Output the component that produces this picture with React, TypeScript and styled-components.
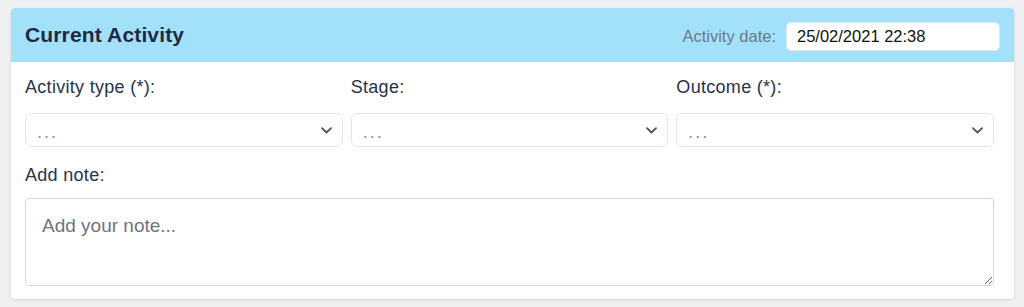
import React from "react";
import styled, { createGlobalStyle } from "styled-components";

const GlobalStyle = createGlobalStyle`
  html, body {
    margin: 0;
    padding: 0;
    background: #eff0f2;
    font-family: "Liberation Sans", Arial, sans-serif;
  }
  * { box-sizing: border-box; }
`;

const Page = styled.div`
  padding: 8px 10px 9px 11px;
`;

const Card = styled.section`
  background: #ffffff;
  border-radius: 4px;
  overflow: hidden;
  box-shadow: 0 1px 3px rgba(0, 0, 0, 0.12);
`;

const Header = styled.header`
  height: 54px;
  background: #a3e1fb;
  display: flex;
  align-items: center;
  justify-content: space-between;
  padding: 0 14px;
`;

const Title = styled.h2`
  margin: 0;
  font-size: 21px;
  font-weight: 700;
  color: #1d2a44;
  letter-spacing: 0.15px;
`;

const DateGroup = styled.div`
  display: flex;
  align-items: center;
  gap: 10px;
  margin-top: 2px;
`;

const DateLabel = styled.label`
  font-size: 16.5px;
  color: #6c7a84;
`;

const DateInput = styled.input`
  width: 214px;
  height: 29px;
  padding: 0 10px;
  border: 1px solid #e4e7eb;
  border-radius: 5px;
  background: #ffffff;
  font-family: "Liberation Sans", Arial, sans-serif;
  font-size: 16.5px;
  color: #111111;
  outline: none;
`;

const Body = styled.div`
  padding: 13px 20px 13px 14px;
`;

const Grid = styled.div`
  display: grid;
  grid-template-columns: repeat(3, 1fr);
  gap: 8px;
`;

const Field = styled.div`
  display: flex;
  flex-direction: column;
`;

const Label = styled.label<{ $top?: number }>`
  display: block;
  margin-top: ${(p) => p.$top ?? 0}px;
  font-size: 18px;
  line-height: 24px;
  color: #28324d;
  letter-spacing: 0.3px;
`;

const SelectBox = styled.div`
  margin-top: 14px;
  height: 34px;
  display: flex;
  align-items: center;
  justify-content: space-between;
  padding: 5px 10px 0 11px;
  border: 1px solid #e3e6ea;
  border-radius: 6px;
  background: #ffffff;
`;

const Placeholder = styled.span`
  font-size: 18px;
  color: #8d949e;
  letter-spacing: 2px;
`;

const Chevron = styled.svg`
  width: 11px;
  height: 7px;
  margin-top: -5px;
  flex: none;
`;

const NoteArea = styled.textarea`
  display: block;
  width: 100%;
  height: 88px;
  margin-top: 11px;
  padding: 16px 16px;
  border: 1px solid #d3d7dc;
  border-radius: 4px;
  font-family: "Liberation Sans", Arial, sans-serif;
  font-size: 19px;
  line-height: 22px;
  color: #111111;
  background: #ffffff;
  outline: none;
  resize: vertical;
  &::placeholder {
    color: #6e747d;
  }
`;

const Select: React.FC = () => (
  <SelectBox>
    <Placeholder>...</Placeholder>
    <Chevron viewBox="0 0 11 7">
      <path
        d="M1 1.2 L5.5 5.5 L10 1.2"
        fill="none"
        stroke="#4b5260"
        strokeWidth="1.8"
        strokeLinecap="round"
        strokeLinejoin="round"
      />
    </Chevron>
  </SelectBox>
);

export default function App() {
  return (
    <>
      <GlobalStyle />
      <Page>
        <Card>
          <Header>
            <Title>Current Activity</Title>
            <DateGroup>
              <DateLabel>Activity date:</DateLabel>
              <DateInput defaultValue="25/02/2021 22:38" />
            </DateGroup>
          </Header>
          <Body>
            <Grid>
              <Field>
                <Label>Activity type (*):</Label>
                <Select />
              </Field>
              <Field>
                <Label>Stage:</Label>
                <Select />
              </Field>
              <Field>
                <Label>Outcome (*):</Label>
                <Select />
              </Field>
            </Grid>
            <Label $top={16}>Add note:</Label>
            <NoteArea placeholder="Add your note..." />
          </Body>
        </Card>
      </Page>
    </>
  );
}
